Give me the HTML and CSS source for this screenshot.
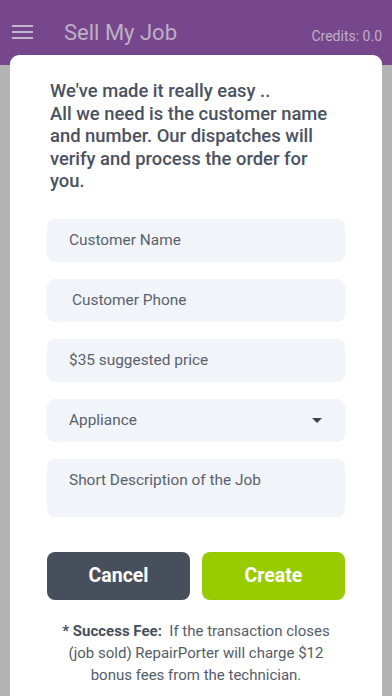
FILE: index.html
```html
<!DOCTYPE html>
<html>
<head>
<meta charset="utf-8">
<link rel="stylesheet" href="styles.css">
</head>
<body>
<div class="app">
  <header class="topbar">
    <div class="menu" aria-label="menu">
      <span></span><span></span><span></span>
    </div>
    <div class="title">Sell My Job</div>
    <div class="credits">Credits: 0.0</div>
  </header>
  <main class="card">
    <p class="intro">We've made it really easy ..<br>All we need is the customer name and number. Our dispatches will verify and process the order for you.</p>
    <form class="form">
      <div class="field">Customer Name</div>
      <div class="field phone">Customer Phone</div>
      <div class="field">$35 suggested price</div>
      <div class="field select">
        <span>Appliance</span>
        <svg class="caret" width="10" height="5" viewBox="0 0 10 5"><path d="M0 0h10L5 5z" fill="#3c4350"/></svg>
      </div>
      <div class="field area">Short Description of the Job</div>
      <div class="actions">
        <div class="btn cancel">Cancel</div>
        <div class="btn create">Create</div>
      </div>
    </form>
    <p class="note"><b>* Success Fee:</b>&nbsp; If the transaction closes (job sold) RepairPorter will charge $12 bonus fees from the technician.</p>
  </main>
</div>
</body>
</html>
```
FILE: styles.css
```css
* { box-sizing: border-box; }
html, body { margin: 0; padding: 0; }
body {
  background: #b3b3b3;
  font-family: Roboto, "Noto Sans", sans-serif;
  height: 696px;
  overflow: hidden;
}
.app { display: flex; flex-direction: column; }
.topbar {
  height: 65px;
  background: #77478d;
  display: flex;
  align-items: flex-start;
  padding: 20px 10px 0 12px;
}
.menu {
  width: 21px;
  display: flex;
  flex-direction: column;
  gap: 4px;
  margin-top: 5px;
}
.menu span {
  display: block;
  height: 2px;
  background: #c3b6cb;
}
.title {
  margin-left: 31px;
  font-size: 22px;
  line-height: 26px;
  color: #bdb0c6;
}
.credits {
  margin-left: auto;
  font-size: 14px;
  line-height: 16px;
  color: #bdb0c6;
  margin-top: 8px;
}
.card {
  margin: -10px 10px 0;
  background: #fff;
  border-radius: 9px 9px 0 0;
  padding: 25px 37px 30px;
  min-height: 700px;
}
.intro {
  margin: 0 12px 26px 3px;
  font-size: 18.4px;
  line-height: 22.6px;
  font-weight: 500;
  color: #4a5261;
}
.form { display: flex; flex-direction: column; gap: 17px; }
.field {
  height: 43px;
  background: #f1f4f8;
  border-radius: 8px;
  padding: 0 22px;
  display: flex;
  align-items: center;
  font-size: 15.4px;
  color: #5a616e;
}
.field.phone { padding-left: 25px; }
.field.select { justify-content: space-between; padding-right: 23px; }
.caret { display: block; }
.field.area {
  height: 58px;
  align-items: flex-start;
  padding-top: 11px;
  line-height: 21px;
}
.actions {
  margin-top: 18px;
  display: grid;
  grid-template-columns: 1fr 1fr;
  gap: 12px;
}
.btn {
  height: 48px;
  border-radius: 8px;
  display: flex;
  align-items: center;
  justify-content: center;
  color: #fff;
  font-weight: 700;
  font-size: 19.5px;
}
.cancel { background: #474f5d; }
.create { background: #99cc00; }
.note {
  margin: 20px 9px 0;
  text-align: center;
  font-size: 15px;
  line-height: 22px;
  color: #555c69;
}
.note b { color: #474f5d; }
```
